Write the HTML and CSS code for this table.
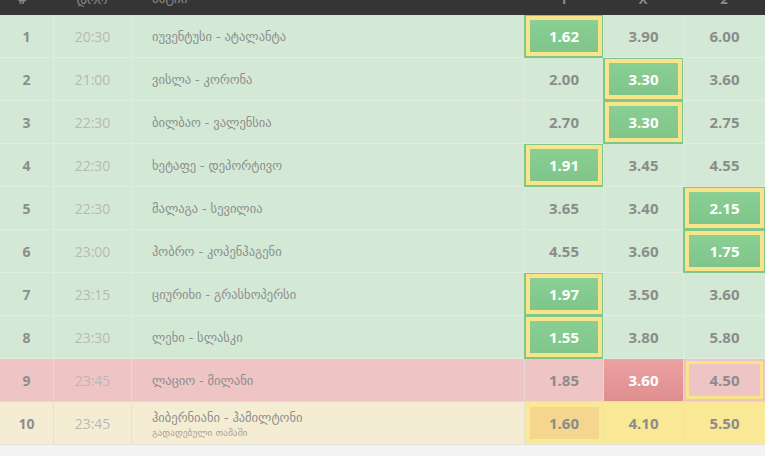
FILE: index.html
```html
<!DOCTYPE html>
<html lang="ka">
<head>
<meta charset="utf-8">
<title>მატჩები</title>
<link rel="stylesheet" href="styles.css">
</head>
<body>
<div class="board">
  <div class="row head">
    <div class="c num">#</div>
    <div class="c time">დრო</div>
    <div class="c match">მატჩი</div>
    <div class="c odd">1</div>
    <div class="c odd">X</div>
    <div class="c odd">2</div>
  </div>

  <div class="row">
    <div class="c num">1</div><div class="c time">20:30</div>
    <div class="c match">იუვენტუსი - ატალანტა</div>
    <div class="c odd best">1.62</div><div class="c odd">3.90</div><div class="c odd">6.00</div>
  </div>
  <div class="row">
    <div class="c num">2</div><div class="c time">21:00</div>
    <div class="c match">ვისლა - კორონა</div>
    <div class="c odd">2.00</div><div class="c odd best">3.30</div><div class="c odd">3.60</div>
  </div>
  <div class="row">
    <div class="c num">3</div><div class="c time">22:30</div>
    <div class="c match">ბილბაო - ვალენსია</div>
    <div class="c odd">2.70</div><div class="c odd best">3.30</div><div class="c odd">2.75</div>
  </div>
  <div class="row">
    <div class="c num">4</div><div class="c time">22:30</div>
    <div class="c match">ხეტაფე - დეპორტივო</div>
    <div class="c odd best">1.91</div><div class="c odd">3.45</div><div class="c odd">4.55</div>
  </div>
  <div class="row">
    <div class="c num">5</div><div class="c time">22:30</div>
    <div class="c match">მალაგა - სევილია</div>
    <div class="c odd">3.65</div><div class="c odd">3.40</div><div class="c odd best">2.15</div>
  </div>
  <div class="row">
    <div class="c num">6</div><div class="c time">23:00</div>
    <div class="c match">ჰობრო - კოპენჰაგენი</div>
    <div class="c odd">4.55</div><div class="c odd">3.60</div><div class="c odd best">1.75</div>
  </div>
  <div class="row">
    <div class="c num">7</div><div class="c time">23:15</div>
    <div class="c match">ციურიხი - გრასხოპერსი</div>
    <div class="c odd best">1.97</div><div class="c odd">3.50</div><div class="c odd">3.60</div>
  </div>
  <div class="row">
    <div class="c num">8</div><div class="c time">23:30</div>
    <div class="c match">ლეხი - სლასკი</div>
    <div class="c odd best">1.55</div><div class="c odd">3.80</div><div class="c odd">5.80</div>
  </div>
  <div class="row lost">
    <div class="c num">9</div><div class="c time">23:45</div>
    <div class="c match">ლაციო - მილანი</div>
    <div class="c odd">1.85</div><div class="c odd result">3.60</div><div class="c odd picked">4.50</div>
  </div>
  <div class="row postponed">
    <div class="c num">10</div><div class="c time">23:45</div>
    <div class="c match"><span class="name">ჰიბერნიანი - ჰამილტონი</span><span class="note">გადადებული თამაში</span></div>
    <div class="c odd void"><span class="box">1.60</span></div><div class="c odd void">4.10</div><div class="c odd void">5.50</div>
  </div>
</div>
</body>
</html>
```

FILE: styles.css
```css
html, body {
  margin: 0;
  padding: 0;
  height: 100%;
  overflow: hidden;
  background: #f4f4f4;
}

.board {
  width: 765px;
  margin-top: -15px;
  font-family: "Open Sans", "DejaVu Sans", sans-serif;
}

.row {
  display: grid;
  grid-template-columns: 53px 78px 393px 79px 80px 82px;
  height: 43px;
  background: #d3e9d5;
}

.c {
  box-sizing: border-box;
  display: flex;
  align-items: center;
  justify-content: center;
  border-left: 1px solid #e1ebe1;
  border-bottom: 1px solid #e1ebe1;
}

.c.num { border-left: none; }

.head {
  height: 30px;
  background: #353535;
}
.head .c {
  border: none;
  color: #8c8c8c;
  font-size: 13px;
  padding-bottom: 3px;
}
.head .c.num { padding-right: 8px; }
.head .c.match { padding-left: 21px; }

.num {
  color: #8d8d8d;
  font-weight: 700;
  font-size: 14px;
}

.time {
  color: #b8b8b8;
  font-size: 14px;
}

.match {
  justify-content: flex-start;
  padding-left: 20px;
  color: #8d8d8d;
  font-family: "DejaVu Sans", sans-serif;
  font-size: 12.5px;
}

.odd {
  color: #8c8c8c;
  font-weight: 700;
  font-size: 15px;
}

.odd.best {
  color: #ffffff;
  border-color: #7fc688;
  background: linear-gradient(#8bd195, #7ec488);
  box-shadow: inset 0 0 0 1px #7fc688, inset 0 0 0 5px #f8e48a;
}

.lost { background: #eec4c5; }
.lost .c { border-color: #e6d6d6; }

.odd.result {
  color: #ffffff;
  background: linear-gradient(#eca2a2, #df8e90);
}

.odd.picked {
  box-shadow: inset 0 0 0 2px #eec4c5, inset 0 0 0 5px #f8e48a;
}

.postponed { background: #f5edd3; }
.postponed .c { border-color: #e3e0d6; }

.match {
  flex-direction: column;
  align-items: flex-start;
  justify-content: center;
}
.match .name { line-height: 16px; padding-top: 2px; }
.match .note {
  font-size: 9.5px;
  line-height: 13px;
  color: #a8a49a;
}

.odd.void { background: #f9e896; }
.odd.void .box {
  display: flex;
  align-items: center;
  justify-content: center;
  width: 69px;
  height: 32px;
  background: #f4d68f;
}
```
